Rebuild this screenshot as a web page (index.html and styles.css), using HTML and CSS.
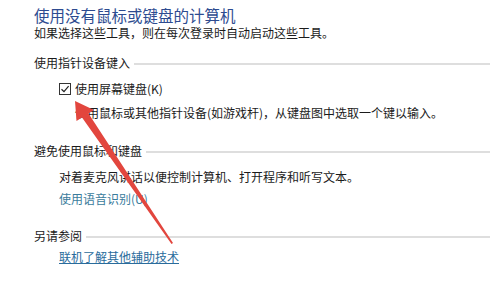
FILE: index.html
```html
<!DOCTYPE html>
<html lang="zh-CN">

<head>
    <meta charset="UTF-8">
    <title>使用没有鼠标或键盘的计算机</title>
    <link rel="stylesheet" href="styles.css">
</head>

<body>
    <section class="page">
        <h1 class="title">使用没有鼠标或键盘的计算机</h1>
        <p class="intro">如果选择这些工具，则在每次登录时自动启动这些工具。</p>

        <div class="group">
            <span class="group_name">使用指针设备键入</span>
            <span class="group_line"></span>
        </div>
        <label class="check">
            <svg class="check_box" width="12" height="12" viewBox="0 0 12 12">
                <rect x="0.5" y="0.5" width="11" height="11" fill="#fff" stroke="#333" />
                <path d="M2.5 6.2 L5 8.6 L9.6 3.2" fill="none" stroke="#222" stroke-width="1.2" />
            </svg>
            <span>使用屏幕键盘(K)</span>
        </label>
        <p class="hint">使用鼠标或其他指针设备(如游戏杆)，从键盘图中选取一个键以输入。</p>

        <div class="group group_second">
            <span class="group_name">避免使用鼠标和键盘</span>
            <span class="group_line"></span>
        </div>
        <p class="text">对着麦克风讲话以便控制计算机、打开程序和听写文本。</p>
        <a class="link" href="#">使用语音识别(U)</a>

        <div class="group group_third">
            <span class="group_name">另请参阅</span>
            <span class="group_line"></span>
        </div>
        <a class="link link_under" href="#">联机了解其他辅助技术</a>
    </section>

    <!-- red arrow drawn over the page -->
    <svg class="arrow" width="490" height="307" viewBox="0 0 490 307">
        <polygon points="75,101 94,110 88.5,113.5 173,243 171.5,244 82,117.5 76.5,121" fill="#e2463e" />
    </svg>
</body>

</html>
```

FILE: styles.css
```css
body {
    margin: 0;
    background: #fff;
    font-family: "Noto Sans CJK SC", "Noto Sans", sans-serif;
    color: #1b1b1b;
    position: relative;
    width: 490px;
    height: 307px;
    overflow: hidden;
}

.page {
    padding: 6px 0 0 34px;
}

.title {
    margin: 0;
    font-size: 15.5px;
    line-height: 18px;
    font-weight: normal;
    color: #2d4b90;
}

.intro {
    margin: 1px 0 0;
    font-size: 12px;
    line-height: 16px;
}

.group {
    display: flex;
    align-items: center;
    margin-top: 14px;
    font-size: 12px;
    line-height: 16px;
}

.group_second {
    margin-top: 22px;
}

.group_third {
    margin-top: 21px;
}

.group_line {
    flex: 1;
    height: 2px;
    margin-left: 4px;
    margin-top: 2px;
    background: #dedede;
}

.check {
    display: flex;
    align-items: center;
    gap: 4px;
    margin: 10px 0 0 25px;
    font-size: 12px;
    line-height: 16px;
}

.hint {
    margin: 8px 0 0 41px;
    font-size: 12px;
    line-height: 16px;
}

.text {
    margin: 10px 0 0 25px;
    font-size: 12px;
    line-height: 16px;
}

.link {
    display: block;
    width: max-content;
    margin: 6px 0 0 25px;
    font-size: 12px;
    line-height: 16px;
    color: #3a7c9c;
    text-decoration: none;
}

.link_under {
    margin-top: 5px;
    color: #2a6c9c;
    text-decoration: underline;
}

.arrow {
    position: absolute;
    left: 0;
    top: 0;
    pointer-events: none;
}
```
